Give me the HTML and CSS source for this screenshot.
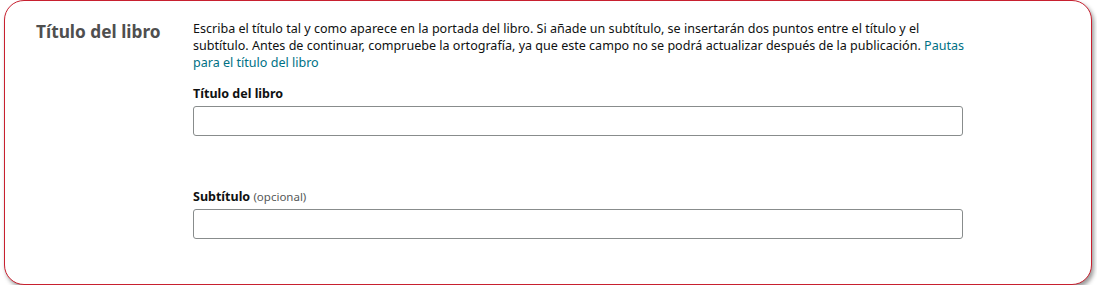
FILE: index.html
```html
<!DOCTYPE html>
<html lang="es">
<head>
<meta charset="utf-8">
<link rel="stylesheet" href="styles.css">
</head>
<body>
<div class="page">
  <section class="card">
    <h2 class="section-title">Título del libro</h2>
    <div class="section-body">
      <p class="desc">Escriba el título tal y como aparece en la portada del libro. Si añade un subtítulo, se insertarán dos puntos entre el título y el subtítulo. Antes de continuar, compruebe la ortografía, ya que este campo no se podrá actualizar después de la publicación. <a href="#" class="link">Pautas para el título del libro</a></p>
      <div class="field">
        <label class="label">Título del libro</label>
        <input class="input" type="text">
      </div>
      <div class="field field-sub">
        <label class="label">Subtítulo <span class="optional">(opcional)</span></label>
        <input class="input" type="text">
      </div>
    </div>
  </section>
</div>
</body>
</html>
```

FILE: styles.css
```css
html, body {
  margin: 0;
  padding: 0;
  background: #ffffff;
}
body {
  font-family: "Noto Sans", "Open Sans", sans-serif;
  color: #0f1111;
}
.page {
  padding: 0 5px 0 4px;
}
.card {
  border: 1px solid #c8202f;
  border-radius: 20px;
  box-shadow: 2px 3px 4px rgba(0, 0, 0, 0.4);
  background: #fff;
  display: flex;
  height: 285px;
  box-sizing: border-box;
  padding: 19px 0 0 31px;
}
.section-title {
  margin: 0;
  width: 157px;
  flex: none;
  font-size: 17.3px;
  line-height: 24px;
  font-weight: 700;
  color: #4f4f4f;
}
.section-body {
  width: 770px;
  padding-top: 0;
}
.desc {
  margin: 0;
  width: 774px;
  font-size: 12.55px;
  line-height: 17px;
}
.link {
  color: #007185;
  text-decoration: none;
}
.field {
  margin-top: 14px;
  display: flex;
  flex-direction: column;
}
.field-sub {
  margin-top: 52px;
}
.label {
  font-size: 12.5px;
  font-weight: 700;
  line-height: 17px;
  margin-bottom: 4px;
}
.optional {
  font-weight: 400;
  font-size: 11.5px;
  color: #565959;
}
.input {
  width: 770px;
  height: 30px;
  box-sizing: border-box;
  border: 1px solid #888c8c;
  border-radius: 3px;
  margin: 0;
  padding: 0 8px;
  font: inherit;
}
```
